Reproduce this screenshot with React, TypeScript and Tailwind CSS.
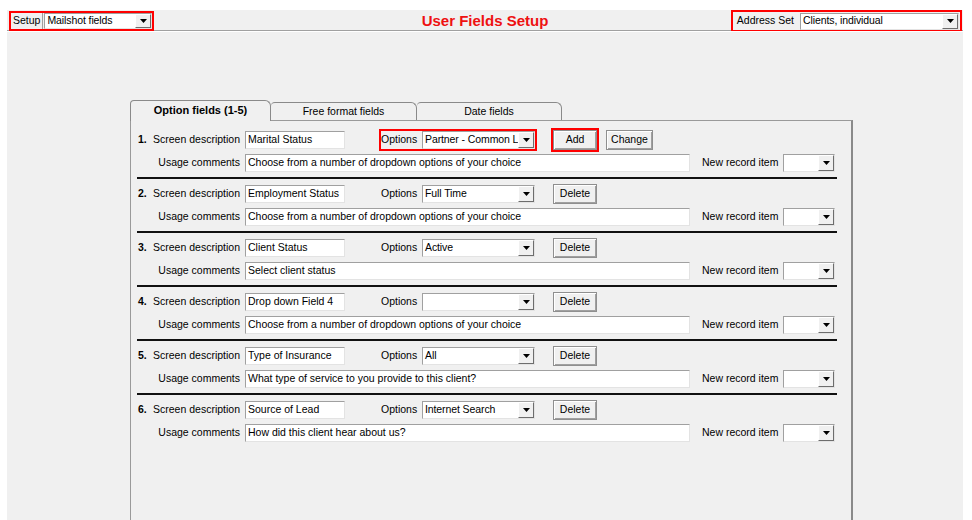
import React from "react";

type FieldRow = {
  desc: string;
  option: string;
  comment: string;
  add?: boolean;
};

const rows: FieldRow[] = [
  { desc: "Marital Status", option: "Partner - Common La", comment: "Choose from a number of dropdown options of your choice", add: true },
  { desc: "Employment Status", option: "Full Time", comment: "Choose from a number of dropdown options of your choice" },
  { desc: "Client Status", option: "Active", comment: "Select client status" },
  { desc: "Drop down Field 4", option: "", comment: "Choose from a number of dropdown options of your choice" },
  { desc: "Type of Insurance", option: "All", comment: "What type of service to you provide to this client?" },
  { desc: "Source of Lead", option: "Internet Search", comment: "How did this client hear about us?" },
];

const sunken =
  "border-t border-l border-t-[#a0a0a0] border-l-[#a0a0a0] border-r border-b border-r-[#e3e3e3] border-b-[#e3e3e3] bg-white";

function Arrow() {
  return (
    <span className="flex h-full w-[16px] shrink-0 items-center justify-center border border-t-white border-l-white border-r-[#6d6d6d] border-b-[#6d6d6d] bg-[#f0f0f0]">
      <svg width="7" height="4" viewBox="0 0 7 4">
        <path d="M0 0h7L3.5 4z" fill="#000" />
      </svg>
    </span>
  );
}

function Combo({ value, className }: { value: string; className: string }) {
  return (
    <div className={`flex items-center overflow-hidden ${sunken} ${className}`}>
      <span className="flex-1 overflow-hidden whitespace-nowrap pl-[2px] tracking-[-0.1px]">{value}</span>
      <Arrow />
    </div>
  );
}

function TextBox({ value, className }: { value: string; className: string }) {
  return (
    <div className={`flex h-[18px] items-center overflow-hidden whitespace-nowrap pl-[2px] ${sunken} ${className}`}>
      {value}
    </div>
  );
}

function Button({ label, className }: { label: string; className: string }) {
  return (
    <div
      className={`flex h-[20px] items-center justify-center border border-[#8f8f8f] bg-[#f0f0f0] shadow-[inset_1px_1px_#ffffff,inset_-1px_-1px_#a0a0a0] ${className}`}
    >
      {label}
    </div>
  );
}

function OptionRow({ row, index, last }: { row: FieldRow; index: number; last: boolean }) {
  const hl = row.add ? "border-[#ff0000]" : "border-transparent";
  return (
    <div>
      <div className="flex h-[20px] items-center">
        <div className="flex w-[103px] items-center justify-between pr-[1px]">
          <span className="font-bold">{index + 1}.</span>
          <span>Screen description</span>
        </div>
        <TextBox value={row.desc} className="ml-[4px] w-[100px]" />
        <div className={`ml-[34px] flex h-[22px] items-center border-2 ${hl}`}>
          <span className="w-[35px]">Options</span>
          <Combo value={row.option} className="ml-[6px] h-[18px] w-[113px]" />
        </div>
        <div className={`ml-[14px] border-2 ${hl}`}>
          <Button label={row.add ? "Add" : "Delete"} className="w-[44px]" />
        </div>
        {row.add && <Button label="Change" className="ml-[7px] w-[47px]" />}
      </div>
      <div className="mt-[4px] flex h-[18px] items-center">
        <div className="flex w-[103px] justify-end pr-[1px]">Usage comments</div>
        <TextBox value={row.comment} className="ml-[4px] w-[445px]" />
        <span className="ml-[12px] w-[74px] whitespace-nowrap">New record item</span>
        <Combo value="" className="ml-[7px] h-[18px] w-[52px]" />
      </div>
      {!last && <div className="my-[5px] ml-[-1px] h-[2px] w-[700px] bg-[#111]" />}
    </div>
  );
}

export default function App() {
  return (
    <div className="h-[520px] w-[972px] overflow-hidden bg-white text-[10.5px] text-black [font-family:'Liberation_Sans',Arial,sans-serif]">
      <div className="ml-[7px] mt-[10px] flex h-[510px] w-[956px] flex-col bg-[#f0f0f0]">
        {/* header */}
        <div className="grid h-[21px] grid-cols-[1fr_auto_1fr] items-center border-b border-b-[#a0a0a0]">
          <div className="flex">
            <div className="ml-[2px] flex h-[20px] items-center border-2 border-[#ff0000]">
              <span className="flex h-full items-center border-r border-[#a0a0a0] px-[2px]">Setup</span>
              <Combo value="Mailshot fields" className="ml-[1px] h-[16px] w-[108px]" />
            </div>
          </div>
          <div className="text-[15px] font-bold text-[#ee1111]">User Fields Setup</div>
          <div className="flex justify-end">
            <div className="mr-[1px] flex h-[22px] items-center border-2 border-[#ff0000] pl-[4px] pr-[1px]">
              <span>Address Set</span>
              <Combo value="Clients, individual" className="ml-[6px] h-[17px] w-[159px]" />
            </div>
          </div>
        </div>
        <div className="h-px bg-white" />

        {/* tabs */}
        <div className="ml-[123px] mt-[68px] flex w-[723px] flex-1 flex-col">
          <div className="flex items-end">
            <div className="relative z-10 -mb-px flex h-[21px] w-[141px] items-center justify-center rounded-tl-[4px] rounded-tr-[6px] border border-b-0 border-[#8a8a8a] bg-[#f0f0f0] pb-[1px] text-[11px] font-bold">
              Option fields (1-5)
            </div>
            <div className="flex h-[18px] w-[146px] items-center justify-center rounded-tl-[4px] rounded-tr-[6px] border border-b-0 border-l-0 border-[#8a8a8a] bg-[#f0f0f0]">
              Free format fields
            </div>
            <div className="flex h-[18px] w-[145px] items-center justify-center rounded-tl-[4px] rounded-tr-[6px] border border-b-0 border-l-0 border-[#8a8a8a] bg-[#f0f0f0]">
              Date fields
            </div>
          </div>
          <div className="flex-1 border-l border-t border-r-2 border-[#9a9a9a] border-r-[#8a8a8a] pl-[7px] pt-[9px]">
            {rows.map((row, i) => (
              <OptionRow key={i} row={row} index={i} last={i === rows.length - 1} />
            ))}
          </div>
        </div>
      </div>
    </div>
  );
}
